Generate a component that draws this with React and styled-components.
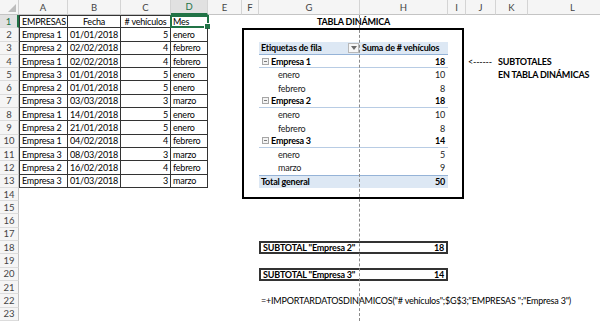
import styled, { createGlobalStyle } from 'styled-components';

const GlobalStyle = createGlobalStyle`
  html, body {
    margin: 0;
    padding: 0;
    background: #ffffff;
  }
  body {
    font-family: Lato, "Liberation Sans", sans-serif;
  }
`;

const COLS = ['A', 'B', 'C', 'D', 'E', 'F', 'G', 'H', 'I', 'J', 'K', 'L'];

const rows = [
    ['Empresa 1', '01/01/2018', 5, 'enero'],
    ['Empresa 2', '02/02/2018', 4, 'febrero'],
    ['Empresa 1', '02/02/2018', 4, 'febrero'],
    ['Empresa 3', '01/01/2018', 5, 'enero'],
    ['Empresa 2', '01/01/2018', 5, 'enero'],
    ['Empresa 3', '03/03/2018', 3, 'marzo'],
    ['Empresa 1', '14/01/2018', 5, 'enero'],
    ['Empresa 2', '21/01/2018', 5, 'enero'],
    ['Empresa 1', '04/02/2018', 4, 'febrero'],
    ['Empresa 3', '08/03/2018', 3, 'marzo'],
    ['Empresa 2', '16/02/2018', 4, 'febrero'],
    ['Empresa 3', '01/03/2018', 3, 'marzo'],
];

const pivot = [
    { label: 'Empresa 1', value: 18, group: true },
    { label: 'enero', value: 10 },
    { label: 'febrero', value: 8 },
    { label: 'Empresa 2', value: 18, group: true },
    { label: 'enero', value: 10 },
    { label: 'febrero', value: 8 },
    { label: 'Empresa 3', value: 14, group: true },
    { label: 'enero', value: 5 },
    { label: 'marzo', value: 9 },
];

function App() {
    return (
        <>
            <GlobalStyle />
            <Viewport>
                <Sheet>
                    <Corner>
                        <svg width="8" height="8" viewBox="0 0 8 8">
                            <polygon points="8,0 8,8 0,8" fill="#bdbdbd" />
                        </svg>
                    </Corner>
                    {COLS.map((c, i) => (
                        <ColHead key={c} $c={i + 2} $active={c === 'D'}>{c}</ColHead>
                    ))}
                    {Array.from({ length: 23 }, (_, i) => (
                        <RowHead key={i} $r={i + 2} $active={i === 0}>{i + 1}</RowHead>
                    ))}

                    {/* source table A1:D13 */}
                    <Cell $c={2} $r={2} $table $first $top>EMPRESAS</Cell>
                    <Cell $c={3} $r={2} $table $top $align="center">Fecha</Cell>
                    <Cell $c={4} $r={2} $table $top $align="center">
                        # vehículos
                    </Cell>
                    <Cell $c={5} $r={2} $table $top $overflow>
                        Mes
                        <Selection>
                            <Handle />
                        </Selection>
                    </Cell>
                    {rows.map((row, i) => (
                        <Row key={i} r={i + 3} row={row} />
                    ))}

                    {/* pivot table */}
                    <Cell $c={8} $r={2} $span={2} $align="center" $bold>TABLA DINÁMICA</Cell>
                    <PivotFrame />
                    <PivotHead $c={8} $r={4}>
                        Etiquetas de fila
                        <FilterButton>
                            <svg width="6" height="4" viewBox="0 0 6 4">
                                <polygon points="0,0 6,0 3,4" fill="#6b6b6b" />
                            </svg>
                        </FilterButton>
                    </PivotHead>
                    <PivotHead $c={9} $r={4}>Suma de # vehículos</PivotHead>
                    {pivot.map((p, i) => (
                        <PivotLine key={i} r={i + 5} item={p} />
                    ))}
                    <PivotTotal $c={8} $r={14}>Total general</PivotTotal>
                    <PivotTotal $c={9} $r={14} $align="right">50</PivotTotal>

                    {/* notes */}
                    <Cell $c={11} $r={5}>&lt;------</Cell>
                    <Cell $c={12} $r={5} $bold $overflow>SUBTOTALES</Cell>
                    <Cell $c={12} $r={6} $bold $overflow>EN TABLA DINÁMICAS</Cell>

                    <ResultBox $r={19}>
                        <span>SUBTOTAL "Empresa 2"</span>
                        <span>18</span>
                    </ResultBox>
                    <ResultBox $r={21}>
                        <span>SUBTOTAL "Empresa 3"</span>
                        <span>14</span>
                    </ResultBox>
                    <Cell $c={8} $r={23} $overflow>
                        =+IMPORTARDATOSDINAMICOS("# vehículos";$G$3;"EMPRESAS ";"Empresa 3")
                    </Cell>

                    <PageBreak />
                </Sheet>
            </Viewport>
        </>
    );
}

function Row({ r, row }) {
    const [empresa, fecha, n, mes] = row;
    return (
        <>
            <Cell $c={2} $r={r} $table $first>{empresa}</Cell>
            <Cell $c={3} $r={r} $table $align="center">{fecha}</Cell>
            <Cell $c={4} $r={r} $table $align="right">{n}</Cell>
            <Cell $c={5} $r={r} $table>{mes}</Cell>
        </>
    );
}

function PivotLine({ r, item }) {
    return (
        <>
            <PivotCell $c={8} $r={r} $group={item.group}>
                {item.group ? <Collapse /> : <Indent />}
                {item.label}
            </PivotCell>
            <PivotCell $c={9} $r={r} $group={item.group} $align="right">
                {item.value}
            </PivotCell>
        </>
    );
}

export default App;

const Viewport = styled.div`
    width: 600px;
    height: 321px;
    overflow: hidden;
`;

const Sheet = styled.div`
    display: grid;
    grid-template-columns: 19px 49px 53px 50px 37px 34px 17px 101px 88px 18px 30px 32px 90px;
    grid-template-rows: 15px repeat(23, 13.3px);
    width: 618px;
    font-size: 9px;
    letter-spacing: -0.2px;
    color: #000;
`;

const Corner = styled.div`
    grid-column: 1;
    grid-row: 1;
    background: #f5f5f5;
    border-right: 1px solid #d0d0d0;
    border-bottom: 1px solid #c4c4c4;
    display: flex;
    align-items: flex-end;
    justify-content: flex-end;
    padding: 0 2px 2px 0;
    box-sizing: border-box;
`;

const ColHead = styled.div`
    grid-column: ${({ $c }) => $c};
    grid-row: 1;
    display: flex;
    align-items: center;
    justify-content: center;
    background: ${({ $active }) => ($active ? '#e1e1e1' : '#f5f5f5')};
    color: ${({ $active }) => ($active ? '#217346' : '#444')};
    border-right: 1px solid #d4d4d4;
    border-bottom: ${({ $active }) => ($active ? '2px solid #217346' : '1px solid #c4c4c4')};
    box-sizing: border-box;
    font-size: 9.5px;
    letter-spacing: 0;
`;

const RowHead = styled.div`
    grid-column: 1;
    grid-row: ${({ $r }) => $r};
    display: flex;
    align-items: center;
    justify-content: center;
    background: ${({ $active }) => ($active ? '#e1e1e1' : '#f5f5f5')};
    color: ${({ $active }) => ($active ? '#217346' : '#444')};
    border-right: ${({ $active }) => ($active ? '2px solid #217346' : '1px solid #c4c4c4')};
    border-bottom: 1px solid #dcdcdc;
    box-sizing: border-box;
    font-size: 9.5px;
    letter-spacing: 0;
`;

const Cell = styled.div`
    grid-column: ${({ $c, $span }) => ($span ? `${$c} / span ${$span}` : $c)};
    grid-row: ${({ $r }) => $r};
    position: relative;
    display: flex;
    align-items: center;
    justify-content: ${({ $align }) =>
        $align === 'right' ? 'flex-end' : $align === 'center' ? 'center' : 'flex-start'};
    padding: 0 2px;
    font-weight: ${({ $bold }) => ($bold ? 700 : 400)};
    white-space: nowrap;
    overflow: ${({ $overflow }) => ($overflow ? 'visible' : 'hidden')};
    box-sizing: border-box;
    border-right: ${({ $table }) => ($table ? '1px solid #333' : 'none')};
    border-bottom: ${({ $table }) => ($table ? '1px solid #333' : 'none')};
    border-left: ${({ $first }) => ($first ? '1px solid #333' : 'none')};
    border-top: ${({ $top }) => ($top ? '1px solid #333' : 'none')};
`;

const Selection = styled.div`
    position: absolute;
    inset: -1px -2px -1px -1px;
    border: 2px solid #217346;
    pointer-events: none;
`;

const Handle = styled.div`
    position: absolute;
    right: -4px;
    bottom: -4px;
    width: 5px;
    height: 5px;
    background: #217346;
    border: 1px solid #fff;
`;

const PivotFrame = styled.div`
    grid-column: 7 / 11;
    grid-row: 3 / 16;
    border: 2px solid #000;
    margin: 0 2px 2px 0;
    pointer-events: none;
`;

const PivotHead = styled.div`
    grid-column: ${({ $c }) => $c};
    grid-row: ${({ $r }) => $r};
    display: flex;
    align-items: center;
    padding: 0 2px;
    background: #dde8f4;
    border-bottom: 1px solid #95b3d7;
    font-weight: 700;
    white-space: nowrap;
    box-sizing: border-box;
    position: relative;
`;

const FilterButton = styled.span`
    position: absolute;
    right: 1px;
    top: 1px;
    bottom: 1px;
    width: 11px;
    background: #f7f7f7;
    border: 1px solid #b8b8b8;
    box-sizing: border-box;
    display: flex;
    align-items: center;
    justify-content: center;
`;

const PivotCell = styled.div`
    grid-column: ${({ $c }) => $c};
    grid-row: ${({ $r }) => $r};
    display: flex;
    align-items: center;
    justify-content: ${({ $align }) => ($align === 'right' ? 'flex-end' : 'flex-start')};
    padding: 0 3px 0 2px;
    font-weight: ${({ $group }) => ($group ? 700 : 400)};
    color: ${({ $group }) => ($group ? '#000' : '#222')};
    border-bottom: ${({ $group }) => ($group ? '1px solid #b8cce4' : 'none')};
    white-space: nowrap;
    box-sizing: border-box;
`;

const PivotTotal = styled.div`
    grid-column: ${({ $c }) => $c};
    grid-row: ${({ $r }) => $r};
    display: flex;
    align-items: center;
    justify-content: ${({ $align }) => ($align === 'right' ? 'flex-end' : 'flex-start')};
    padding: 0 3px 0 2px;
    background: #dde8f4;
    border-top: 1px solid #95b3d7;
    font-weight: 700;
    white-space: nowrap;
    box-sizing: border-box;
`;

const Collapse = styled.span`
    display: inline-block;
    position: relative;
    width: 5px;
    height: 5px;
    margin: 0 2px 0 1px;
    border: 1px solid #a6a6a6;
    background: #f3f3f3;

    &::after {
        content: '';
        position: absolute;
        left: 1px;
        right: 1px;
        top: 2px;
        height: 1px;
        background: #7a7a7a;
    }
`;

const Indent = styled.span`
    display: inline-block;
    width: 17px;
`;

const ResultBox = styled.div`
    grid-column: 8 / 10;
    grid-row: ${({ $r }) => $r};
    display: flex;
    align-items: center;
    justify-content: space-between;
    padding: 0 2px 0 2px;
    border: 2px solid #333;
    font-weight: 700;
    white-space: nowrap;
    box-sizing: border-box;
`;

const PageBreak = styled.div`
    grid-column: 9;
    grid-row: 2 / -1;
    border-left: 1px dashed #8a8a8a;
    margin-left: -1px;
    pointer-events: none;
    z-index: 2;
`;
